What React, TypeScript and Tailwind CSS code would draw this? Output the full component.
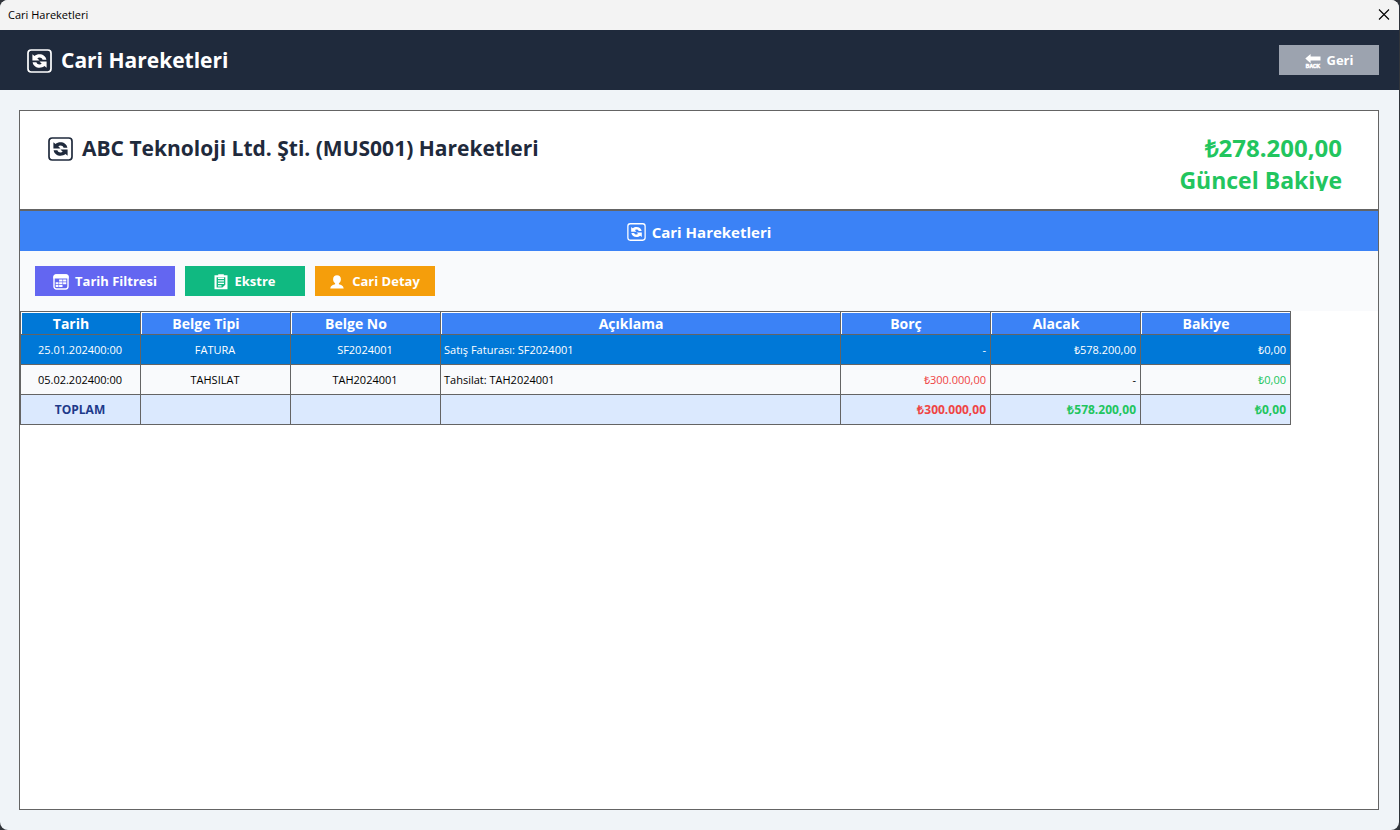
import React from 'react';

function RefreshIcon({ className }: { className: string }) {
  return (
    <svg viewBox="0 0 25 24" className={className} fill="none" aria-hidden="true">
      <rect x="1" y="1" width="23" height="22" rx="3.2" stroke="currentColor" strokeWidth="1.7" />
      <path
        fill="currentColor"
        d="M5.400 5.200 7.500 7C8.800 5.900 10.600 5.300 12.500 5.300c3.400 0 6.200 1.900 6.900 5.500h-3.800c-.5-1.500-1.600-2.200-3.100-2.200-.9 0-1.600.3-2.200.7l2.200 2.200H5.400zM19.600 18.800l-2.100-1.800c-1.300 1.100-3.100 1.700-5 1.700-3.400 0-6.200-1.900-6.900-5.500h3.800c.5 1.500 1.600 2.200 3.100 2.200.9 0 1.600-.3 2.200-.7l-2.200-2.200h7.100z"
      />
    </svg>
  );
}

function BackIcon() {
  return (
    <svg viewBox="0 0 16 15" className="h-[15px] w-4" fill="currentColor" aria-hidden="true">
      <path d="M.3 4.500 5.600 0v2.600H15.500v4H5.600V9.200z" />
      <text
        x="8"
        y="14.200"
        textAnchor="middle"
        fontSize="5"
        stroke="currentColor"
        strokeWidth="0.5"
        className="font-['Liberation_Sans',sans-serif] font-bold"
      >
        BACK
      </text>
    </svg>
  );
}

function CalendarIcon() {
  return (
    <svg viewBox="0 0 16 16" className="size-4" fill="none" aria-hidden="true">
      <path fill="currentColor" d="M3 .3h10A2.700 2.700 0 0 1 15.700 3v1.600H.3V3A2.700 2.700 0 0 1 3 .3z" />
      <rect x="1" y="1" width="14" height="14" rx="2.400" stroke="currentColor" strokeWidth="1.400" />
      <path
        fill="currentColor"
        d="M6.100 5.600h3.400v2H6.100zM10.100 5.600h3.200v2h-3.200zM2.700 8.300h2.800v2H2.700zM6.100 8.300h3.400v2H6.100zM10.100 8.300h3.200v2h-3.200zM2.700 11h2.800v2H2.700zM6.100 11h3.400v2H6.100z"
      />
    </svg>
  );
}

function StatementIcon() {
  return (
    <svg viewBox="0 0 14 16" className="h-4 w-3.5" aria-hidden="true">
      <path
        fill="currentColor"
        fillRule="evenodd"
        d="M.5 1.200h3.700V.3h5.600v.9h3.700v14H.5zM2.600 3.300v10.300h5.800l2.900-2.900V3.300z"
      />
      <path fill="currentColor" d="M4 3.600h6v1.400H4zM4 6.200h6v1.300H4zM4 8.700h6V10H4zM4 11.200h3.500v1.200H4z" />
    </svg>
  );
}

function PersonIcon() {
  return (
    <svg viewBox="0 0 14 14" className="size-3.5" fill="currentColor" aria-hidden="true">
      <path d="M7 .3c2.300 0 3.900 1.600 3.900 3.900 0 1.700-.8 3.300-2 4.100v1c2 .4 4.400 1.200 4.800 4.200H.3c.4-3 2.800-3.800 4.800-4.200v-1c-1.200-.8-2-2.400-2-4.100C3.100 1.900 4.700.3 7 .3z" />
    </svg>
  );
}

const columns = [
  { label: 'Tarih', width: 'w-[120px]' },
  { label: 'Belge Tipi', width: 'w-[150px]' },
  { label: 'Belge No', width: 'w-[150px]' },
  { label: 'Açıklama', width: 'w-[400px]' },
  { label: 'Borç', width: 'w-[150px]' },
  { label: 'Alacak', width: 'w-[150px]' },
  { label: 'Bakiye', width: 'w-[150px]' },
];

const align = ['text-center', 'text-center', 'text-center', 'text-left', 'text-right', 'text-right', 'text-right'];

const rows = [
  {
    cells: ['25.01.202400:00', 'FATURA', 'SF2024001', 'Satış Faturası: SF2024001', '-', '₺578.200,00', '₺0,00'],
    row: 'bg-[#0078d7] text-white text-[11px]',
    tones: ['', '', '', '', '', '', ''],
  },
  {
    cells: ['05.02.202400:00', 'TAHSILAT', 'TAH2024001', 'Tahsilat: TAH2024001', '₺300.000,00', '-', '₺0,00'],
    row: 'bg-[#f9fafc] text-black text-[11px]',
    tones: ['', '', '', '', 'text-[#ef4444]', '', 'text-[#22c55e]'],
  },
  {
    cells: ['TOPLAM', '', '', '', '₺300.000,00', '₺578.200,00', '₺0,00'],
    row: 'bg-[#dbe9fe] text-[#1e3a8a] text-[12px] font-bold',
    tones: ['', '', '', '', 'text-[#ef4444]', 'text-[#22c55e]', 'text-[#22c55e]'],
  },
];

export default function App() {
  return (
    <div className="min-h-screen bg-[#30343a] font-['Open_Sans',sans-serif]">
      <div className="mr-px flex min-h-screen flex-col overflow-hidden rounded-lg bg-[#f0f4f8]">
        <div className="flex h-[30px] shrink-0 items-center justify-between bg-[#f3f3f3] pr-[7px] pl-2 text-[11px] text-black">
          <span>Cari Hareketleri</span>
          <button type="button" aria-label="Kapat" className="flex size-4 items-center justify-center">
            <svg viewBox="0 0 12 12" className="size-3" stroke="currentColor" strokeWidth="1.1" aria-hidden="true">
              <path d="M1 .5l10 10M11 .5L1 10.500" />
            </svg>
          </button>
        </div>

        <header className="flex h-[60px] shrink-0 items-center justify-between bg-[#1f2a3c] pr-5 pl-[27px] text-white">
          <h1 className="flex items-center gap-[9px] pt-0.5 text-[21px] font-bold">
            <RefreshIcon className="h-6 w-[25px]" />
            Cari Hareketleri
          </h1>
          <button
            type="button"
            className="flex h-[30px] w-[100px] items-center justify-center gap-1.5 bg-[#9ca3af] pt-0.5 text-[13px] font-bold"
          >
            <BackIcon />
            Geri
          </button>
        </header>

        <main className="flex grow flex-col pt-5 pr-5 pb-5 pl-[19px]">
          <section className="flex grow flex-col border border-[#646464] bg-white">
            <div className="flex h-[100px] shrink-0 items-start justify-between border-b-2 border-[#646464] pt-[21px] pr-9 pl-7">
              <h2 className="flex h-[34px] items-center gap-[9px] text-[21px] font-bold text-[#1f2a3c]">
                <RefreshIcon className="h-6 w-[25px]" />
                ABC Teknoloji Ltd. Şti. (MUS001) Hareketleri
              </h2>
              <div className="h-[59px] overflow-hidden text-right leading-8 font-bold text-[#22c55e]">
                <p className="text-[24px] leading-8">₺278.200,00</p>
                <p className="text-[23px] leading-8">Güncel Bakiye</p>
              </div>
            </div>

            <h3 className="flex h-10 shrink-0 items-center justify-center gap-1.5 bg-[#3b82f6] pt-0.5 text-[15px] font-bold text-white">
              <RefreshIcon className="h-[18px] w-[19px]" />
              Cari Hareketleri
            </h3>

            <div className="flex h-[60px] shrink-0 items-center gap-2.5 bg-[#f9fafc] px-[15px] text-[13px] font-bold text-white">
              <button type="button" className="flex h-[30px] w-[140px] items-center justify-center gap-1.5 bg-[#6366f1] pt-0.5">
                <CalendarIcon />
                Tarih Filtresi
              </button>
              <button type="button" className="flex h-[30px] w-[120px] items-center justify-center gap-1.5 bg-[#10b981] pt-0.5">
                <StatementIcon />
                Ekstre
              </button>
              <button type="button" className="flex h-[30px] w-[120px] items-center justify-center gap-2 bg-[#f59e0b] pt-0.5">
                <PersonIcon />
                Cari Detay
              </button>
            </div>

            <div>
              <table className="w-[1271px] table-fixed border-separate border-spacing-0 border-t border-l border-[#646464]">
                <thead>
                  <tr className="h-[23px]">
                    {columns.map((column, index) => (
                      <th
                        key={column.label}
                        scope="col"
                        className={`${column.width} ${index === 0 ? 'bg-[#0078d7]' : 'bg-[#3b82f6]'} border-r border-b border-[#646464] pt-0.5 pr-[19px] pb-0 pl-0 text-center text-[14px] leading-5 font-bold text-white shadow-[inset_1px_1px_0_#ffffff]`}
                      >
                        {column.label}
                      </th>
                    ))}
                  </tr>
                </thead>
                <tbody>
                  {rows.map((row) => (
                    <tr key={row.cells[0]} className={`h-[30px] ${row.row}`}>
                      {row.cells.map((cell, index) => (
                        <td
                          key={index}
                          className={`${align[index]} ${row.tones[index]} border-r border-b border-[#646464] py-0 pr-1 pl-[3px] leading-5 whitespace-nowrap`}
                        >
                          {cell}
                        </td>
                      ))}
                    </tr>
                  ))}
                </tbody>
              </table>
            </div>
          </section>
        </main>
      </div>
    </div>
  );
}
